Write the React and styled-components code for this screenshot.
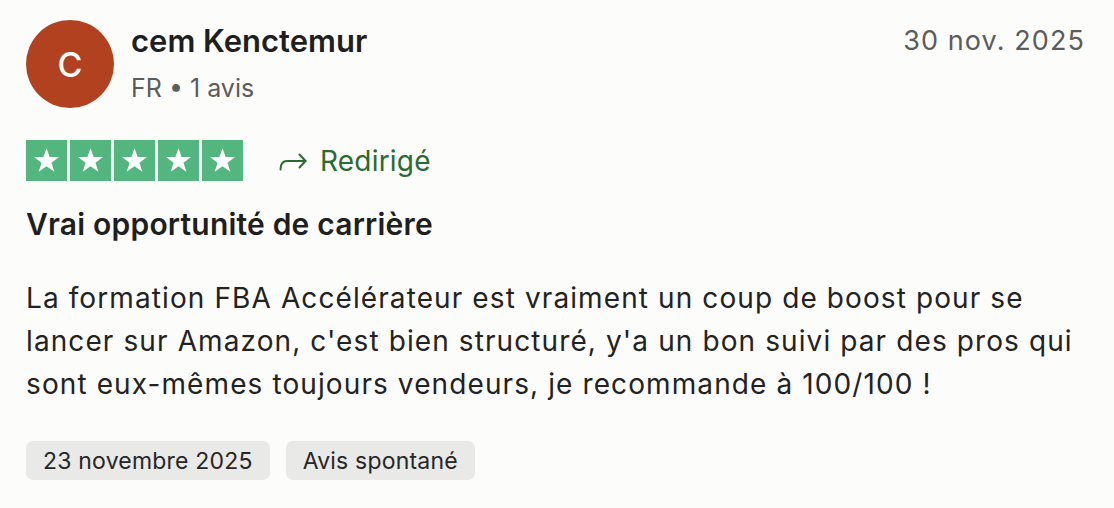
import React from 'react';
import styled, { createGlobalStyle } from 'styled-components';

const GlobalStyle = createGlobalStyle`
  html, body {
    margin: 0;
    padding: 0;
    background: #fcfcfb;
  }
  body {
    font-family: Inter, "Noto Sans", "Liberation Sans", sans-serif;
    color: #1f1f1f;
  }
`;

const Card = styled.article`
  width: 1114px;
  box-sizing: border-box;
  padding: 20px 18px 0 26px;
`;

const Header = styled.header`
  display: flex;
  align-items: flex-start;
`;

const Avatar = styled.div`
  width: 88px;
  height: 88px;
  border-radius: 50%;
  background: #b1411f;
  color: #fff;
  display: flex;
  align-items: center;
  justify-content: center;
  font-size: 34px;
  font-weight: 500;
  flex-shrink: 0;
`;

const Who = styled.div`
  margin-left: 17px;
  flex: 1;
  display: flex;
  flex-direction: column;
`;

const Name = styled.div`
  margin-top: 2px;
  font-size: 31px;
  font-weight: 600;
  line-height: 38px;
  color: #1f1f1f;
`;

const Meta = styled.div`
  margin-top: 13px;
  font-size: 25px;
  line-height: 30px;
  color: #5c5c58;
`;

const DateLabel = styled.div`
  margin-top: 2px;
  margin-right: 11px;
  font-size: 27px;
  line-height: 38px;
  color: #5c5c58;
  letter-spacing: 1.1px;
`;

const RatingRow = styled.div`
  display: flex;
  align-items: center;
  margin-top: 32px;
`;

const Stars = styled.div`
  display: flex;
  gap: 3px;
`;

const StarBox = styled.div`
  width: 41px;
  height: 41px;
  background: ${p => (p.$on ? '#54b67f' : '#dcdce6')};
  display: flex;
  align-items: center;
  justify-content: center;
`;

const Redirect = styled.div`
  display: flex;
  align-items: center;
  margin-left: 36px;
  color: #2a6b30;
  font-size: 28px;
  letter-spacing: 0.2px;
  gap: 13px;
`;

const Title = styled.h2`
  margin: 25px 0 0 0;
  font-size: 30px;
  font-weight: 600;
  line-height: 36px;
  letter-spacing: 0.2px;
  color: #1f1f1f;
`;

const Body = styled.p`
  margin: 35px 0 0 0;
  font-size: 28px;
  line-height: 43px;
  letter-spacing: 1.1px;
  color: #222;
`;

const Tags = styled.div`
  display: flex;
  gap: 16px;
  margin-top: 35px;
`;

const Tag = styled.span`
  background: #e9e9e8;
  border-radius: 7px;
  padding: 0 17px;
  height: 39px;
  display: inline-flex;
  align-items: center;
  font-size: 23px;
  letter-spacing: 0.2px;
  color: #262626;
`;

const Star = () => (
  <svg width="29" height="29" viewBox="0 0 24 24">
    <path
      d="M12 1.8l2.6 7.4h7.7l-6.2 4.6 2.4 7.6L12 16.8l-6.5 4.6 2.4-7.6L1.7 9.2h7.7z"
      fill="#fff"
    />
  </svg>
);

const Arrow = () => (
  <svg width="28" height="20" viewBox="0 0 28 20" fill="none" stroke="#2a6b30" strokeWidth="2" strokeLinecap="round" strokeLinejoin="round">
    <path d="M1.5 18.5 C1.5 12 4 10 8 10 H26.5" />
    <path d="M20.5 3.5 L26.5 10 L20.5 16.5" />
  </svg>
);

export default function App() {
  return (
    <>
      <GlobalStyle />
      <Card>
        <Header>
          <Avatar>C</Avatar>
          <Who>
            <Name>cem Kenctemur</Name>
            <Meta>FR • 1 avis</Meta>
          </Who>
          <DateLabel>30 nov. 2025</DateLabel>
        </Header>
        <RatingRow>
          <Stars>
            {[0, 1, 2, 3, 4].map(i => (
              <StarBox key={i} $on>
                <Star />
              </StarBox>
            ))}
          </Stars>
          <Redirect>
            <Arrow />
            Redirigé
          </Redirect>
        </RatingRow>
        <Title>Vrai opportunité de carrière</Title>
        <Body>
          La formation FBA Accélérateur est vraiment un coup de boost pour se lancer sur Amazon, c'est bien structuré, y'a un bon suivi par des pros qui sont eux-mêmes toujours vendeurs, je recommande à 100/100 !
        </Body>
        <Tags>
          <Tag>23 novembre 2025</Tag>
          <Tag>Avis spontané</Tag>
        </Tags>
      </Card>
    </>
  );
}
